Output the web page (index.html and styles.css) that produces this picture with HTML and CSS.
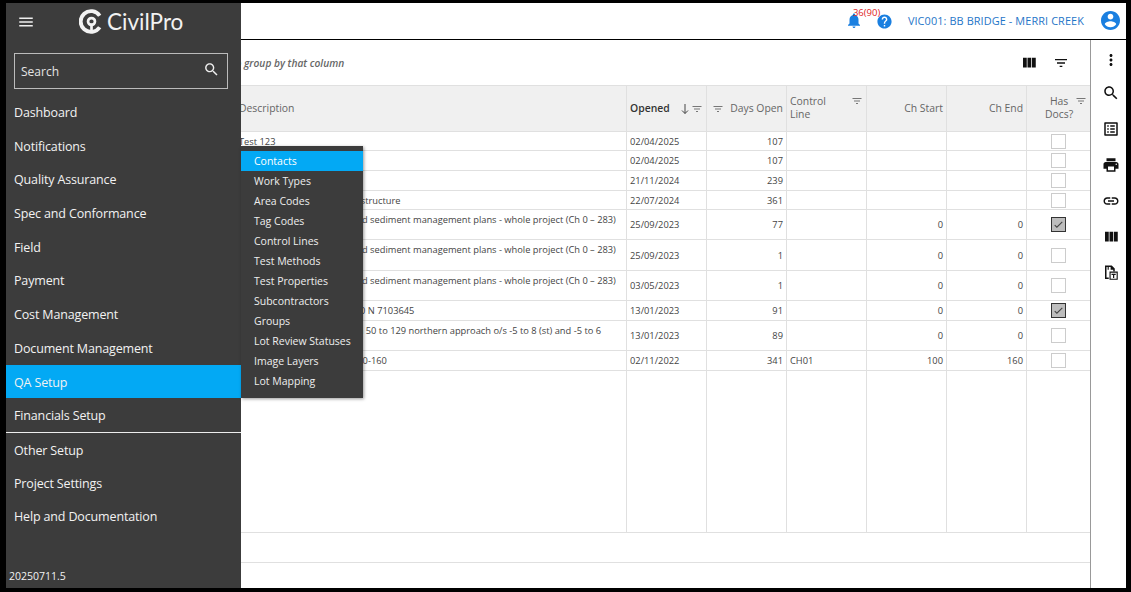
FILE: index.html
```html
<!DOCTYPE html>
<html lang="en">
  <head>
    <meta charset="UTF-8" />
    <meta name="viewport" content="width=device-width, initial-scale=1.0" />
    <title>CivilPro</title>
    <link rel="stylesheet" href="styles.css">
  </head>
  <body>
    <div class="frame">
      <div class="main">
        <header class="topbar">
          <div class="alerts">
            <svg class="icon bell" viewBox="0 0 24 24"><path d="M12 22c1.1 0 2-.9 2-2h-4c0 1.1.89 2 2 2zm6-6v-5c0-3.07-1.64-5.64-4.5-6.32V4c0-.83-.67-1.5-1.5-1.5s-1.5.67-1.5 1.5v.68C7.63 5.36 6 7.92 6 11v5l-2 2v1h16v-1l-2-2z"/></svg>
            <span class="alert-count">36(90)</span>
          </div>
          <svg class="icon help" viewBox="0 0 24 24"><path d="M12 2C6.48 2 2 6.48 2 12s4.48 10 10 10 10-4.48 10-10S17.52 2 12 2zm1 17h-2v-2h2v2zm2.07-7.75l-.9.92C13.45 12.9 13 13.5 13 15h-2v-.5c0-1.1.45-2.1 1.17-2.83l1.24-1.26c.37-.36.59-.86.59-1.41 0-1.1-.9-2-2-2s-2 .9-2 2H8c0-2.21 1.79-4 4-4s4 1.79 4 4c0 .88-.36 1.68-.93 2.25z"/></svg>
          <span class="project">VIC001: BB BRIDGE - MERRI CREEK</span>
          <svg class="icon avatar" viewBox="2 2 20 20"><path d="M12 2C6.48 2 2 6.48 2 12s4.48 10 10 10 10-4.48 10-10S17.52 2 12 2zm0 3c1.66 0 3 1.34 3 3s-1.34 3-3 3-3-1.34-3-3 1.34-3 3-3zm0 14.2c-2.5 0-4.71-1.28-6-3.22.03-1.99 4-3.08 6-3.08 1.99 0 5.97 1.09 6 3.08-1.29 1.94-3.5 3.22-6 3.22z"/></svg>
        </header>

        <div class="workspace">
          <section class="content">
            <div class="toolbar">
              <span class="group-hint">Drag a column header here to group by that column</span>
              <div class="toolbar-icons">
                <svg class="icon" viewBox="0 0 24 24"><path d="M10 18h5V5h-5v13zm-6 0h5V5H4v13zM16 5v13h5V5h-5z"/></svg>
                <svg class="icon thin" viewBox="0 0 24 24"><path d="M10 18h4v-2h-4v2zM3 6v2h18V6H3zm3 7h12v-2H6v2z"/></svg>
              </div>
            </div>

            <table class="grid">
              <colgroup>
                <col class="col-hidden">
                <col class="col-desc">
                <col class="col-std"><col class="col-std"><col class="col-std"><col class="col-std"><col class="col-std">
                <col class="col-docs">
              </colgroup>
              <thead>
                <tr>
                  <th></th>
                  <th class="th-desc">Description</th>
                  <th><div class="th-row"><b class="sorted">Opened</b><svg class="sort-arrow" viewBox="0 0 8 12"><path d="M4 1v9.500M1 7.500l3 3 3-3"/></svg><svg class="filter" viewBox="0 0 24 24"><path d="M10 18h4v-2h-4v2zM3 6v2h18V6H3zm3 7h12v-2H6v2z"/></svg></div></th>
                  <th><div class="th-row th-days"><svg class="filter" viewBox="0 0 24 24"><path d="M10 18h4v-2h-4v2zM3 6v2h18V6H3zm3 7h12v-2H6v2z"/></svg><span>Days Open</span></div></th>
                  <th><div class="th-row th-top"><span>Control<br>Line</span><svg class="filter" viewBox="0 0 24 24"><path d="M10 18h4v-2h-4v2zM3 6v2h18V6H3zm3 7h12v-2H6v2z"/></svg></div></th>
                  <th class="num">Ch Start</th>
                  <th class="num">Ch End</th>
                  <th><div class="th-row th-top th-docs"><span>Has<br>Docs?</span><svg class="filter" viewBox="0 0 24 24"><path d="M10 18h4v-2h-4v2zM3 6v2h18V6H3zm3 7h12v-2H6v2z"/></svg></div></th>
                </tr>
              </thead>
              <tbody>
                <tr class="r19"><td></td><td class="desc">Test 123</td><td>02/04/2025</td><td class="num">107</td><td></td><td></td><td></td><td class="box"><span class="check"></span></td></tr>
                <tr class="r20"><td></td><td class="desc"></td><td>02/04/2025</td><td class="num">107</td><td></td><td></td><td></td><td class="box"><span class="check"></span></td></tr>
                <tr class="r20"><td></td><td class="desc"></td><td>21/11/2024</td><td class="num">239</td><td></td><td></td><td></td><td class="box"><span class="check"></span></td></tr>
                <tr class="r19"><td></td><td class="desc">Bridge abutments piling substructure</td><td>22/07/2024</td><td class="num">361</td><td></td><td></td><td></td><td class="box"><span class="check"></span></td></tr>
                <tr class="r30"><td></td><td class="desc">Prepared all sites erosion and sediment management plans - whole project (Ch 0 – 283)</td><td>25/09/2023</td><td class="num">77</td><td></td><td class="num">0</td><td class="num">0</td><td class="box"><span class="check checked"><svg viewBox="0 0 24 24"><path d="M5 13l4 4 10-10" /></svg></span></td></tr>
                <tr class="r31"><td></td><td class="desc">Prepared all sites erosion and sediment management plans - whole project (Ch 0 – 283)</td><td>25/09/2023</td><td class="num">1</td><td></td><td class="num">0</td><td class="num">0</td><td class="box"><span class="check"></span></td></tr>
                <tr class="r30"><td></td><td class="desc">Prepared all sites erosion and sediment management plans - whole project (Ch 0 – 283)</td><td>03/05/2023</td><td class="num">1</td><td></td><td class="num">0</td><td class="num">0</td><td class="box"><span class="check"></span></td></tr>
                <tr class="r20"><td></td><td class="desc">Survey control point, E 28340 N 7103645</td><td>13/01/2023</td><td class="num">91</td><td></td><td class="num">0</td><td class="num">0</td><td class="box"><span class="check checked"><svg viewBox="0 0 24 24"><path d="M5 13l4 4 10-10" /></svg></span></td></tr>
                <tr class="r30"><td></td><td class="desc">Pavement work from section 50 to 129 northern approach o/s -5 to 8 (st) and -5 to 6</td><td>13/01/2023</td><td class="num">89</td><td></td><td class="num">0</td><td class="num">0</td><td class="box"><span class="check"></span></td></tr>
                <tr class="r20"><td></td><td class="desc">Stripping and topsoils Ch. 100-160</td><td>02/11/2022</td><td class="num">341</td><td>CH01</td><td class="num">100</td><td class="num">160</td><td class="box"><span class="check"></span></td></tr>
                <tr class="filler"><td></td><td></td><td></td><td></td><td></td><td></td><td></td><td></td></tr>
              </tbody>
            </table>
            <div class="grid-footer"></div>
            <div class="grid-pager"></div>
          </section>

          <aside class="rail">
            <svg class="icon" viewBox="0 0 24 24"><path d="M12 8c1.1 0 2-.9 2-2s-.9-2-2-2-2 .9-2 2 .9 2 2 2zm0 2c-1.1 0-2 .9-2 2s.9 2 2 2 2-.9 2-2-.9-2-2-2zm0 6c-1.1 0-2 .9-2 2s.9 2 2 2 2-.9 2-2-.9-2-2-2z"/></svg>
            <svg class="icon" viewBox="0 0 24 24"><path d="M15.5 14h-.79l-.28-.27C15.41 12.59 16 11.11 16 9.5 16 5.91 13.09 3 9.5 3S3 5.91 3 9.5 5.91 16 9.5 16c1.61 0 3.09-.59 4.23-1.57l.27.28v.79l5 4.99L20.49 19l-4.99-5zm-6 0C7.01 14 5 11.99 5 9.5S7.01 5 9.5 5 14 7.01 14 9.5 11.99 14 9.5 14z"/></svg>
            <svg class="icon" viewBox="0 0 24 24"><path d="M19 5v14H5V5h14m1.1-2H3.9c-.5 0-.9.4-.9.9v16.2c0 .4.4.9.9.9h16.2c.4 0 .9-.5.9-.9V3.9c0-.5-.5-.9-.9-.9zM11 7h6v2h-6V7zm0 4h6v2h-6v-2zm0 4h6v2h-6zM7 7h2v2H7zm0 4h2v2H7zm0 4h2v2H7z"/></svg>
            <svg class="icon" viewBox="0 0 24 24"><path d="M19 8H5c-1.66 0-3 1.34-3 3v6h4v4h12v-4h4v-6c0-1.66-1.34-3-3-3zm-3 11H8v-5h8v5zm3-7c-.55 0-1-.45-1-1s.45-1 1-1 1 .45 1 1-.45 1-1 1zm-1-9H6v4h12V3z"/></svg>
            <svg class="icon" viewBox="0 0 24 24"><path d="M3.9 12c0-1.71 1.39-3.1 3.1-3.1h4V7H7c-2.76 0-5 2.24-5 5s2.24 5 5 5h4v-1.9H7c-1.71 0-3.1-1.39-3.1-3.1zM8 13h8v-2H8v2zm9-6h-4v1.9h4c1.71 0 3.1 1.39 3.1 3.1s-1.39 3.1-3.1 3.1h-4V17h4c2.76 0 5-2.24 5-5s-2.24-5-5-5z"/></svg>
            <svg class="icon" viewBox="0 0 24 24"><path d="M10 18h5V5h-5v13zm-6 0h5V5H4v13zM16 5v13h5V5h-5z"/></svg>
            <svg class="icon doc-icon" viewBox="0 0 24 24"><path d="M4 2h9l4 4v4h-2V7.500h-3.500V4H9v3.500H7.500V4H6v14h3v2H4z"/><path d="M10 10h11v11H10zm1.500 1.500v8h8v-8z"/><path d="M12.700 13h5.600v1.500h-2v4h-1.600v-4h-2z"/></svg>
          </aside>
        </div>
      </div>

      <nav class="sidebar">
        <div class="brand">
          <svg class="icon menu-icon" viewBox="0 0 24 24"><path d="M3 18h18v-2H3v2zm0-5h18v-2H3v2zm0-7v2h18V6H3z"/></svg>
          <div class="logo">
            <svg class="logo-mark" viewBox="0 0 26 26">
              <path class="logo-ring" d="M21.500 7A10.800 10.800 0 1 0 21.500 19"/>
              <circle class="logo-eye" cx="13" cy="13" r="3.600"/>
              <path class="logo-stem" d="M11.600 15h2.800v9h-2.800z"/>
            </svg>
            <span class="logo-text">CivilPro</span>
          </div>
        </div>
        <div class="search">
          <span>Search</span>
          <svg class="icon" viewBox="0 0 24 24"><path d="M15.5 14h-.79l-.28-.27C15.41 12.59 16 11.11 16 9.5 16 5.91 13.09 3 9.5 3S3 5.91 3 9.5 5.91 16 9.5 16c1.61 0 3.09-.59 4.23-1.57l.27.28v.79l5 4.99L20.49 19l-4.99-5zm-6 0C7.01 14 5 11.99 5 9.5S7.01 5 9.5 5 14 7.01 14 9.5 11.99 14 9.5 14z"/></svg>
        </div>
        <ul class="nav-list">
          <li>Dashboard</li>
          <li>Notifications</li>
          <li>Quality Assurance</li>
          <li>Spec and Conformance</li>
          <li>Field</li>
          <li>Payment</li>
          <li>Cost Management</li>
          <li>Document Management</li>
          <li class="active">QA Setup</li>
          <li>Financials Setup</li>
          <li class="divided">Other Setup</li>
          <li>Project Settings</li>
          <li>Help and Documentation</li>
        </ul>
        <div class="version">20250711.5</div>
      </nav>

      <ul class="flyout">
        <li class="active">Contacts</li>
        <li>Work Types</li>
        <li>Area Codes</li>
        <li>Tag Codes</li>
        <li>Control Lines</li>
        <li>Test Methods</li>
        <li>Test Properties</li>
        <li>Subcontractors</li>
        <li>Groups</li>
        <li>Lot Review Statuses</li>
        <li>Image Layers</li>
        <li>Lot Mapping</li>
      </ul>
    </div>
  </body>
</html>
```

FILE: styles.css
```css
* {
  margin: 0;
  padding: 0;
  box-sizing: border-box;
}
body {
  width: 1131px;
  height: 592px;
  overflow: hidden;
  background: #000;
  font-family: "Open Sans", sans-serif;
  padding: 3px 5px 4px 6px;
}
ul {
  list-style: none;
}
.icon {
  display: block;
  width: 18px;
  height: 18px;
  fill: #111;
  flex: none;
}
.frame {
  position: relative;
  height: 585px;
  background: #fff;
  overflow: hidden;
}
.main {
  display: flex;
  flex-direction: column;
  height: 100%;
}

/* top bar */
.topbar {
  height: 37px;
  flex: none;
  display: flex;
  align-items: center;
  justify-content: flex-end;
  padding: 0 6px 2px 0;
  border-bottom: 1px solid #000;
}
.alerts {
  position: relative;
  width: 32px;
  height: 18px;
}
.bell {
  width: 18px;
  height: 19px;
  fill: #1a7fe0;
}
.alert-count {
  position: absolute;
  left: 8px;
  top: -5px;
  font-size: 9.5px;
  color: #e01b24;
}
.help {
  width: 17px;
  height: 17px;
  fill: #1a7fe0;
  margin: 3px 15px 0 -1px;
}
.project {
  font-size: 10.9px;
  font-weight: 500;
  color: #1f76c8;
  margin-right: 17px;
  letter-spacing: 0.1px;
}
.avatar {
  width: 19px;
  height: 19px;
  fill: #1a7fe0;
}

/* grid */
.workspace {
  flex: 1;
  display: flex;
  min-height: 0;
}
.content {
  flex: 1;
  min-width: 0;
}
.toolbar {
  height: 45px;
  display: flex;
  align-items: center;
  justify-content: space-between;
  padding: 0 21px 0 96px;
}
.group-hint {
  font-size: 10.2px;
  font-style: italic;
  font-weight: 600;
  color: #666;
}
.toolbar-icons {
  display: flex;
  align-items: center;
  gap: 15px;
}
.toolbar-icons .thin {
  width: 16px;
  height: 16px;
}
.grid {
  width: 1084px;
  height: 448px;
  table-layout: fixed;
  border-collapse: collapse;
  font-size: 9.3px;
  color: #444;
}
.col-hidden {
  width: 229px;
}
.col-desc {
  width: 391px;
}
.col-std {
  width: 80px;
}
.col-docs {
  width: 64px;
}
.grid th,
.grid td {
  border: 1px solid #e0e0e0;
  padding: 0 3px;
  overflow: hidden;
  white-space: nowrap;
}
.grid thead tr {
  height: 46px;
}
.grid th {
  background: #f0f0f0;
  font-size: 10.4px;
  font-weight: 400;
  color: #666;
  text-align: left;
  line-height: 13px;
}
.grid .num {
  text-align: right;
}
.th-row {
  display: flex;
  align-items: center;
  gap: 2px;
}
.sorted {
  font-weight: 600;
  color: #333;
  margin-right: auto;
}
.sort-arrow {
  width: 8px;
  height: 12px;
  fill: none;
  stroke: #444;
  stroke-width: 1;
  flex: none;
}
.filter {
  width: 12px;
  height: 12px;
  fill: #777;
  flex: none;
}
.th-days {
  justify-content: flex-end;
  gap: 6px;
}
.th-top {
  justify-content: space-between;
  align-items: flex-start;
  margin-top: -2px;
}
.th-docs span {
  flex: 1;
  text-align: center;
  padding-left: 15px;
}
.r19 {
  height: 19px;
}
.r20 {
  height: 20px;
}
.r30 {
  height: 30px;
}
.r31 {
  height: 31px;
}
.grid .desc {
  vertical-align: top;
  padding-top: 2px;
  line-height: 15px;
}
.check {
  display: block;
  width: 15px;
  height: 15px;
  margin-left: 21px;
  border: 1px solid #ccc;
  background: #fff;
}
.check.checked {
  background: #bdbdbd;
  border-color: #333;
}
.check svg {
  display: block;
  width: 100%;
  height: 100%;
  fill: none;
  stroke: #444;
  stroke-width: 2;
}
.grid-footer {
  height: 30px;
  border-bottom: 1px solid #e0e0e0;
}

/* right rail */
.rail {
  width: 36px;
  flex: none;
  border-left: 1px solid #999;
  padding: 11px 0 0 11px;
  display: flex;
  flex-direction: column;
  gap: 18px;
}
.rail .icon:first-child {
  margin-bottom: -3px;
}

/* side menu */
.sidebar {
  position: absolute;
  left: 0;
  top: 0;
  bottom: 0;
  width: 235px;
  background: #3c3c3c;
  color: #f2f2f2;
  display: flex;
  flex-direction: column;
}
.brand {
  height: 50px;
  flex: none;
  position: relative;
  padding: 10px 0 0 11px;
}
.menu-icon {
  fill: #eee;
}
.logo {
  position: absolute;
  left: 73px;
  top: 5px;
  display: flex;
  align-items: center;
  gap: 3px;
}
.logo-mark {
  width: 25px;
  height: 25px;
}
.logo-ring {
  fill: none;
  stroke: #f2f2f2;
  stroke-width: 4;
}
.logo-eye {
  fill: none;
  stroke: #f2f2f2;
  stroke-width: 2.8;
}
.logo-stem {
  fill: #f2f2f2;
}
.logo-text {
  font-family: Lato, sans-serif;
  font-size: 22.5px;
  color: #f2f2f2;
}
.search {
  height: 36px;
  flex: none;
  margin: 0 13px 6px 8px;
  border: 1px solid #bbb;
  display: flex;
  align-items: center;
  justify-content: space-between;
  padding: 0 7px 0 6px;
  font-size: 12px;
  color: #e4e4e4;
}
.search .icon {
  width: 17px;
  height: 17px;
  fill: #eee;
  margin-top: -4px;
}
.nav-list li {
  height: 33.7px;
  line-height: 35px;
  padding-left: 8px;
  font-size: 12.5px;
  letter-spacing: -0.15px;
}
.nav-list .active {
  background: #03a9f4;
}
.nav-list .divided {
  border-top: 1px solid #eee;
}
.version {
  margin-top: auto;
  padding: 0 0 5px 3px;
  font-size: 10.5px;
}
.flyout {
  position: absolute;
  left: 235px;
  top: 143px;
  width: 122px;
  background: #3c3c3c;
  color: #eee;
  padding: 5px 0 7px;
  font-size: 10.5px;
  box-shadow: 1px 1px 3px rgba(0, 0, 0, 0.4);
}
.flyout li {
  height: 20px;
  line-height: 20px;
  padding-left: 13px;
}
.flyout .active {
  background: #03a9f4;
  color: #fff;
}
```
